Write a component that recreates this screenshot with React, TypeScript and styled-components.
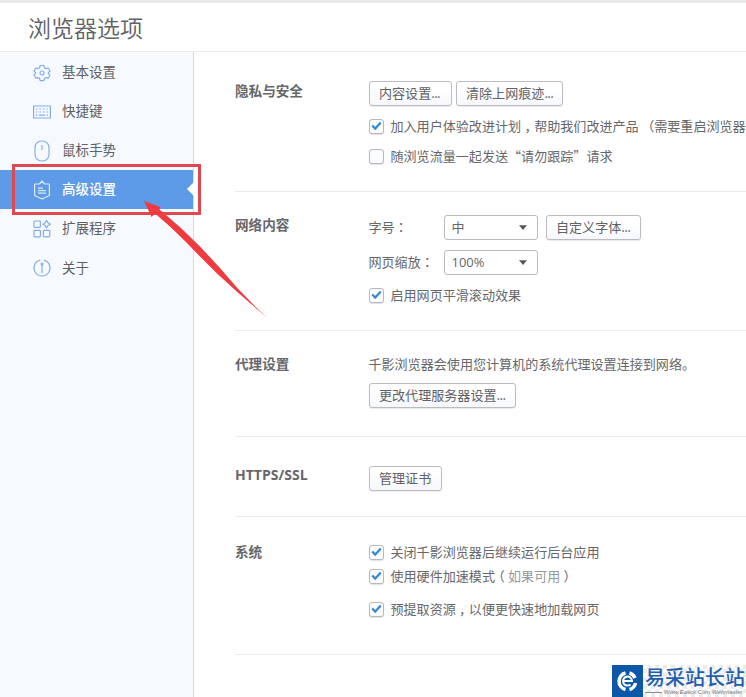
import React from "react";
import styled, { createGlobalStyle, css } from "styled-components";

const GlobalStyle = createGlobalStyle`
  * { box-sizing: border-box; }
  html, body { margin: 0; padding: 0; overflow: hidden; background: #fff; }
  body {
    font-family: "Noto Sans CJK SC", "Noto Sans", sans-serif;
    font-size: 13.07px;
    line-height: 20px;
    color: #66676b;
  }
`;

const Page = styled.div`
  position: relative;
  width: 746px;
  height: 697px;
  overflow: hidden;
  display: flex;
  flex-direction: column;
`;

const Header = styled.header`
  flex: none;
  height: 52px;
  padding: 7px 0 0 28px;
  border-top: 3px solid #e9e9e9;
  border-bottom: 1px solid #e9ecee;
`;

const Title = styled.h1`
  margin: 0;
  font-size: 23px;
  line-height: 34px;
  font-weight: 350;
  color: #606166;
`;

const Body = styled.div`
  flex: 1;
  display: flex;
  min-height: 0;
`;

const Sidebar = styled.nav`
  flex: none;
  width: 194px;
  padding-top: 1px;
  background: #f6faff;
  border-right: 1px solid #d9dbde;
`;

const NavItem = styled.div<{ $active?: boolean }>`
  position: relative;
  display: flex;
  align-items: center;
  height: 39.1px;
  padding-left: 33px;
  gap: 11px;
  font-size: 13.5px;
  color: #5f6064;
  svg {
    flex: none;
    stroke: #82aee4;
  }
  ${(p) =>
    p.$active &&
    css`
      background: #5d9ae8;
      color: #fff;
      font-weight: 500;
      svg {
        stroke: #dcebff;
      }
      &::after {
        content: "";
        position: absolute;
        right: -1px;
        top: 12px;
        border: 7px solid transparent;
        border-left: 0;
        border-right-color: #fff;
      }
    `}
`;

const NavLabel = styled.span`
  padding-bottom: 3px;
`;

const Content = styled.main`
  flex: 1;
  min-width: 0;
  padding-left: 41px;
`;

const Section = styled.section<{ $h: number; $top: number }>`
  display: grid;
  grid-template-columns: 133.5px 1fr;
  height: ${(p) => p.$h}px;
  padding-top: ${(p) => p.$top}px;
  border-bottom: 1px solid #ebebed;
  white-space: nowrap;
`;

const Heading = styled.h2<{ $latin?: boolean }>`
  margin: -1px 0 0;
  font-size: ${(p) => (p.$latin ? 14 : 13.6)}px;
  line-height: 20px;
  font-weight: 700;
  font-family: ${(p) => (p.$latin ? '"Open Sans", ' : "")}"Noto Sans CJK SC", sans-serif;
  color: #66676c;
`;

const Row = styled.div<{ $gap?: number; $mt?: number; $h?: number }>`
  display: flex;
  align-items: center;
  gap: ${(p) => p.$gap ?? 0}px;
  margin-top: ${(p) => p.$mt ?? 0}px;
  height: ${(p) => p.$h ?? 20}px;
`;

const Button = styled.button<{ $w: number }>`
  width: ${(p) => p.$w}px;
  height: 25px;
  padding: 0 0 2px 9.5px;
  text-align: left;
  font: inherit;
  line-height: 20px;
  color: #606166;
  white-space: nowrap;
  border: 1px solid #babcc1;
  border-radius: 3px;
  background: linear-gradient(#fff 30%, #f5f7fb);
  box-shadow: 0 1px 1px rgba(0, 0, 0, 0.08);
`;

const Dots = styled.span`
  letter-spacing: -0.7px;
`;

const Select = styled.div`
  display: flex;
  align-items: center;
  justify-content: space-between;
  width: 94px;
  height: 25px;
  margin-right: 8px;
  padding: 0 10px 1px 7px;
  border: 1px solid #babcc1;
  border-radius: 3px;
  font-family: "Open Sans", "Noto Sans CJK SC", sans-serif;
  font-size: 13px;
`;

const FieldName = styled.span`
  width: 75px;
  padding-bottom: 2px;
  font-family: "Noto Sans CJK JP", sans-serif;
`;

const Box = styled.span`
  flex: none;
  display: grid;
  place-items: center;
  width: 15px;
  height: 15px;
  margin-right: 7px;
  border: 1px solid #b6b8bf;
  border-radius: 3px;
  background: #fcfdff;
  box-shadow: 0 1px 1px rgba(0, 0, 0, 0.12);
`;

/* Half-width punctuation centred in a full-width cell */
const Punct = styled.span`
  font-feature-settings: "halt";
  margin: 0 3.26px;
`;

const OpenParen = styled.span`
  margin-left: 2.5px;
`;

const Muted = styled.span`
  color: #97989c;
`;

const RedFrame = styled.div`
  position: absolute;
  left: 12px;
  top: 164px;
  width: 189px;
  height: 51px;
  border: 3px solid #df4850;
`;

const Arrow = styled.svg`
  position: absolute;
  left: 140px;
  top: 196px;
`;

const Watermark = styled.div`
  position: absolute;
  left: 612px;
  top: 665px;
  display: flex;
  width: 134px;
  height: 32px;
`;

const WatermarkText = styled.div`
  flex: 1;
  padding-left: 2px;
  overflow: hidden;
  white-space: nowrap;
  background: repeating-conic-gradient(#ececec 0 25%, #fff 0 50%) 0 0 / 8px 8px;
`;

const BrandName = styled.div`
  font-size: 20px;
  line-height: 24px;
  font-weight: 500;
  color: #1f5fae;
`;

const BrandUrl = styled.div`
  display: flex;
  align-items: center;
  gap: 2px;
  height: 6px;
  font: italic 6px/6px "Liberation Sans", sans-serif;
  color: #77797e;
  &::before {
    content: "";
    width: 17px;
    height: 1px;
    background: #8a8c90;
  }
`;

const Icon = ({ children }: { children: React.ReactNode }) => (
  <svg width="18" height="22" viewBox="0 0 18 22" fill="none" strokeWidth="1.2" strokeLinejoin="round">
    {children}
  </svg>
);

const GearIcon = () => (
  <Icon>
    <path d="M7.200 3.500h3.600l.6 2.200 1.600.9 2.200-.6 1.800 3-1.600 1.600v1l1.600 1.600-1.800 3-2.200-.6-1.600.9-.6 2.100H7.200l-.6-2.100-1.600-.9-2.200.6-1.800-3 1.600-1.600v-1L1 9l1.800-3 2.200.6 1.600-.9z" />
    <circle cx="9" cy="11" r="2" />
  </Icon>
);

const KeyboardIcon = () => (
  <Icon>
    <rect x="0.6" y="5" width="16.8" height="12" />
    <path d="M3 8h12M3 11h12" strokeDasharray="1.6 1.8" />
    <path d="M3 14.200h1.600M6 14.200h6M13.400 14.200H15" />
  </Icon>
);

const MouseIcon = () => (
  <Icon>
    <rect x="2" y="1" width="14" height="20" rx="6.5" />
    <path d="M9 5v5" />
  </Icon>
);

const ShieldIcon = () => (
  <Icon>
    <path d="M1.600 5H6.500L9 2l2.500 3h4.900v11.500L9 20l-7.400-3.500z" />
    <path d="M5 9.200h5M5 11.700h8M5 14.200h8" />
  </Icon>
);

const ExtensionsIcon = () => (
  <Icon>
    <rect x="1" y="3" width="6.4" height="6.4" rx="0.8" />
    <rect x="1" y="12.4" width="6.4" height="6.4" rx="0.8" />
    <rect x="10.4" y="12.4" width="6.4" height="6.4" rx="0.8" />
    <path d="M12.200 4.800l1.400-2.400 1.400 2.400 2.400 1.400-2.400 1.400-1.400 2.400-1.400-2.400-2.400-1.400z" />
  </Icon>
);

const AboutIcon = () => (
  <Icon>
    <path d="M7.200 3.200a8 8 0 1 0 3.600 0" />
    <path d="M9 8v8" />
    <circle cx="9" cy="7" r="0.9" />
  </Icon>
);

const Check = ({ on = true }: { on?: boolean }) => (
  <Box>
    {on && (
      <svg width="11" height="10" viewBox="0 0 11 10" fill="none" stroke="#3688d4" strokeWidth="2.200">
        <path d="M1.200 4.400l3 3.200L9.800 1.600" />
      </svg>
    )}
  </Box>
);

const Caret = () => (
  <svg width="8" height="5" viewBox="0 0 8 5" fill="#55565a">
    <path d="M0 0.300h8L4 5z" />
  </svg>
);

const navItems = [
  { label: "基本设置", icon: <GearIcon /> },
  { label: "快捷键", icon: <KeyboardIcon /> },
  { label: "鼠标手势", icon: <MouseIcon /> },
  { label: "高级设置", icon: <ShieldIcon />, active: true },
  { label: "扩展程序", icon: <ExtensionsIcon /> },
  { label: "关于", icon: <AboutIcon /> },
];

export default function App() {
  return (
    <Page>
      <GlobalStyle />
      <Header>
        <Title>浏览器选项</Title>
      </Header>
      <Body>
        <Sidebar>
          {navItems.map((item) => (
            <NavItem key={item.label} $active={item.active}>
              {item.icon}
              <NavLabel>{item.label}</NavLabel>
            </NavItem>
          ))}
        </Sidebar>
        <Content>
          <Section $h={140} $top={29}>
            <Heading>隐私与安全</Heading>
            <div>
              <Row $gap={4} $h={25}>
                <Button $w={83}>内容设置<Dots>...</Dots></Button>
                <Button $w={107}>清除上网痕迹<Dots>...</Dots></Button>
              </Row>
              <Row $mt={10}>
                <Check />
                <span>加入用户体验改进计划<Punct>，</Punct>帮助我们改进产品<OpenParen>（</OpenParen>需要重启浏览器</span>
              </Row>
              <Row $mt={10}>
                <Check on={false} />
                随浏览流量一起发送“请勿跟踪”请求
              </Row>
            </div>
          </Section>
          <Section $h={139} $top={23}>
            <Heading>网络内容</Heading>
            <div>
              <Row $h={25}>
                <FieldName>字号：</FieldName>
                <Select>中<Caret /></Select>
                <Button $w={95}>自定义字体<Dots>...</Dots></Button>
              </Row>
              <Row $h={25} $mt={10}>
                <FieldName>网页缩放：</FieldName>
                <Select>100%<Caret /></Select>
              </Row>
              <Row $mt={10}>
                <Check />
                启用网页平滑滚动效果
              </Row>
            </div>
          </Section>
          <Section $h={106} $top={23}>
            <Heading>代理设置</Heading>
            <div>
              <Row>千影浏览器会使用您计算机的系统代理设置连接到网络。</Row>
              <Row $h={25} $mt={9}>
                <Button $w={147}>更改代理服务器设置<Dots>...</Dots></Button>
              </Row>
            </div>
          </Section>
          <Section $h={80} $top={29}>
            <Heading $latin>HTTPS/SSL</Heading>
            <Row $h={25}>
              <Button $w={73}>管理证书</Button>
            </Row>
          </Section>
          <Section $h={138} $top={25}>
            <Heading>系统</Heading>
            <div>
              <Row>
                <Check />
                关闭千影浏览器后继续运行后台应用
              </Row>
              <Row $mt={4}>
                <Check />
                <span>使用硬件加速模式<Punct>（</Punct><Muted>如果可用</Muted><Punct>）</Punct></span>
              </Row>
              <Row $mt={13}>
                <Check />
                <span>预提取资源<Punct>，</Punct>以便更快速地加载网页</span>
              </Row>
            </div>
          </Section>
        </Content>
      </Body>
      <RedFrame />
      <Arrow width="130" height="124" viewBox="140 196 130 124">
        <path
          d="M144 201L160.500 207L159.500 209.500Q181 227 200 246.500L220 268Q242 295 267 317.500Q240 295 217 273.500L197 253.500Q176 231 155 213.500L151.500 217Z"
          fill="#ef3b40"
        />
      </Arrow>
      <Watermark>
        <svg width="31" height="32" viewBox="0 0 31 32">
          <rect width="31" height="32" fill="#0c57a6" />
          <g fill="none" stroke="#fff">
            <path d="M13.500 8A8.500 8.500 0 0 0 13.500 24.500" strokeWidth="3.500" />
            <path d="M17.500 8A8.500 8.500 0 0 1 23 13" strokeWidth="3.500" />
            <path d="M17.500 24.500A8.500 8.500 0 0 0 23.500 18" strokeWidth="3.500" />
            <path d="M11 16h9a4.500 4.500 0 1 0-1.500 3.400" strokeWidth="2" />
          </g>
        </svg>
        <WatermarkText>
          <BrandName>易采站长站</BrandName>
          <BrandUrl>Www.Easck.Com Webmaster</BrandUrl>
        </WatermarkText>
      </Watermark>
    </Page>
  );
}
